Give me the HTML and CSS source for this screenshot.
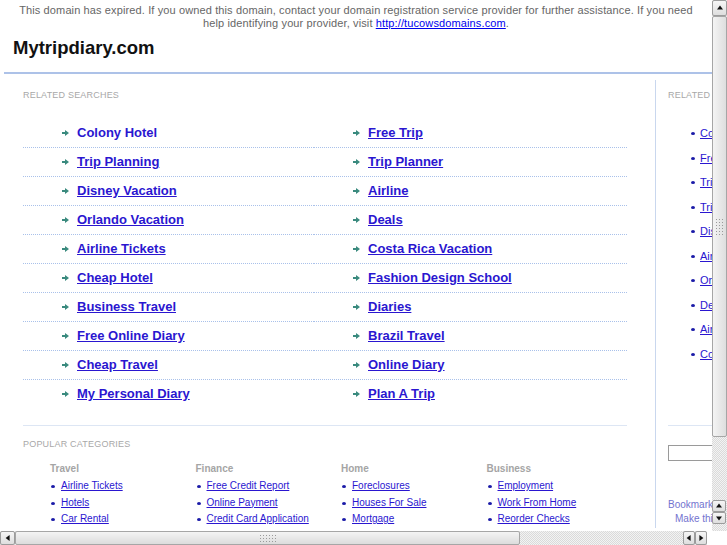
FILE: index.html
```html
<!DOCTYPE html>
<html lang="en">
<head>
  <meta charset="UTF-8">
  <meta name="viewport" content="width=device-width, initial-scale=1.0">
  <title>Mytripdiary.com</title>
  <link rel="stylesheet" href="styles.css">
</head>
<body>
  <div class="notice">
    This domain has expired. If you owned this domain, contact your domain registration service provider for further assistance. If you need help identifying your provider, visit <a href="#">http://tucowsdomains.com</a>.
  </div>

  <div class="page">
    <h1 class="domain">Mytripdiary.com</h1>

    <div class="content">
      <div class="main">
        <h2 class="label">Related Searches</h2>
        <ul class="searches">
          <li><svg class="arrow" viewBox="0 0 7 6"><path d="M0 2h3V0l4 3-4 3V4H0z"/></svg><a href="#" class="hover">Colony Hotel</a></li>
          <li><svg class="arrow" viewBox="0 0 7 6"><path d="M0 2h3V0l4 3-4 3V4H0z"/></svg><a href="#">Free Trip</a></li>
          <li><svg class="arrow" viewBox="0 0 7 6"><path d="M0 2h3V0l4 3-4 3V4H0z"/></svg><a href="#">Trip Planning</a></li>
          <li><svg class="arrow" viewBox="0 0 7 6"><path d="M0 2h3V0l4 3-4 3V4H0z"/></svg><a href="#">Trip Planner</a></li>
          <li><svg class="arrow" viewBox="0 0 7 6"><path d="M0 2h3V0l4 3-4 3V4H0z"/></svg><a href="#">Disney Vacation</a></li>
          <li><svg class="arrow" viewBox="0 0 7 6"><path d="M0 2h3V0l4 3-4 3V4H0z"/></svg><a href="#">Airline</a></li>
          <li><svg class="arrow" viewBox="0 0 7 6"><path d="M0 2h3V0l4 3-4 3V4H0z"/></svg><a href="#">Orlando Vacation</a></li>
          <li><svg class="arrow" viewBox="0 0 7 6"><path d="M0 2h3V0l4 3-4 3V4H0z"/></svg><a href="#">Deals</a></li>
          <li><svg class="arrow" viewBox="0 0 7 6"><path d="M0 2h3V0l4 3-4 3V4H0z"/></svg><a href="#">Airline Tickets</a></li>
          <li><svg class="arrow" viewBox="0 0 7 6"><path d="M0 2h3V0l4 3-4 3V4H0z"/></svg><a href="#">Costa Rica Vacation</a></li>
          <li><svg class="arrow" viewBox="0 0 7 6"><path d="M0 2h3V0l4 3-4 3V4H0z"/></svg><a href="#">Cheap Hotel</a></li>
          <li><svg class="arrow" viewBox="0 0 7 6"><path d="M0 2h3V0l4 3-4 3V4H0z"/></svg><a href="#">Fashion Design School</a></li>
          <li><svg class="arrow" viewBox="0 0 7 6"><path d="M0 2h3V0l4 3-4 3V4H0z"/></svg><a href="#">Business Travel</a></li>
          <li><svg class="arrow" viewBox="0 0 7 6"><path d="M0 2h3V0l4 3-4 3V4H0z"/></svg><a href="#">Diaries</a></li>
          <li><svg class="arrow" viewBox="0 0 7 6"><path d="M0 2h3V0l4 3-4 3V4H0z"/></svg><a href="#">Free Online Diary</a></li>
          <li><svg class="arrow" viewBox="0 0 7 6"><path d="M0 2h3V0l4 3-4 3V4H0z"/></svg><a href="#">Brazil Travel</a></li>
          <li><svg class="arrow" viewBox="0 0 7 6"><path d="M0 2h3V0l4 3-4 3V4H0z"/></svg><a href="#">Cheap Travel</a></li>
          <li><svg class="arrow" viewBox="0 0 7 6"><path d="M0 2h3V0l4 3-4 3V4H0z"/></svg><a href="#">Online Diary</a></li>
          <li><svg class="arrow" viewBox="0 0 7 6"><path d="M0 2h3V0l4 3-4 3V4H0z"/></svg><a href="#">My Personal Diary</a></li>
          <li><svg class="arrow" viewBox="0 0 7 6"><path d="M0 2h3V0l4 3-4 3V4H0z"/></svg><a href="#">Plan A Trip</a></li>
        </ul>

        <div class="popular">
          <h2 class="label">Popular Categories</h2>
          <div class="cats">
            <div class="cat">
              <h3>Travel</h3>
              <ul>
                <li><a href="#">Airline Tickets</a></li>
                <li><a href="#">Hotels</a></li>
                <li><a href="#">Car Rental</a></li>
              </ul>
            </div>
            <div class="cat">
              <h3>Finance</h3>
              <ul>
                <li><a href="#">Free Credit Report</a></li>
                <li><a href="#">Online Payment</a></li>
                <li><a href="#">Credit Card Application</a></li>
              </ul>
            </div>
            <div class="cat">
              <h3>Home</h3>
              <ul>
                <li><a href="#">Foreclosures</a></li>
                <li><a href="#">Houses For Sale</a></li>
                <li><a href="#">Mortgage</a></li>
              </ul>
            </div>
            <div class="cat">
              <h3>Business</h3>
              <ul>
                <li><a href="#">Employment</a></li>
                <li><a href="#">Work From Home</a></li>
                <li><a href="#">Reorder Checks</a></li>
              </ul>
            </div>
          </div>
        </div>
      </div>

      <div class="side">
        <h2 class="label">Related Searches</h2>
        <ul class="side-links">
          <li><a href="#">Colony Hotel</a></li>
          <li><a href="#">Free Trip</a></li>
          <li><a href="#">Trip Planning</a></li>
          <li><a href="#">Trip Planner</a></li>
          <li><a href="#">Disney Vacation</a></li>
          <li><a href="#">Airline</a></li>
          <li><a href="#">Orlando Vacation</a></li>
          <li><a href="#">Deals</a></li>
          <li><a href="#">Airline Tickets</a></li>
          <li><a href="#">Costa Rica Vacation</a></li>
        </ul>
        <div class="side-search">
          <input type="text" class="search-box">
        </div>
        <div class="bookmark">
          <div>Bookmark this page</div>
          <div class="homepage">Make this your homepage</div>
        </div>
      </div>
    </div>
  </div>

  <!-- window scrollbars -->
  <div class="vscroll">
    <div class="sb-btn up tall"></div>
    <div class="sb-thumb"><span class="grip"></span></div>
    <div class="sb-track"></div>
    <div class="sb-btn up small"></div>
    <div class="sb-btn down small"></div>
    <div class="sb-end"></div>
  </div>
  <div class="hscroll">
    <div class="sb-btn left wide"></div>
    <div class="sb-thumb"><span class="grip"></span></div>
    <div class="sb-track"></div>
    <div class="sb-btn left narrow"></div>
    <div class="sb-btn right narrow"></div>
    <div class="sb-corner"></div>
  </div>
</body>
</html>
```

FILE: styles.css
```css
* {
  margin: 0;
  padding: 0;
  box-sizing: border-box;
}

html,
body {
  overflow: hidden;
}

body {
  font-family: "Liberation Sans", Arial, Helvetica, sans-serif;
  background-color: #fff;
  color: #333;
  width: 727px;
  height: 545px;
}

a {
  color: #2a16d0;
}

.notice {
  width: 712px;
  padding: 4px 18px 0;
  font-size: 11px;
  line-height: 13px;
  letter-spacing: 0.12px;
  color: #666;
  text-align: center;
}

.notice a {
  color: #0000ee;
}

.page {
  width: 880px;
  padding-left: 4px;
}

.domain {
  font-size: 18.5px;
  line-height: 22px;
  color: #111;
  margin: 7px 0 13px 9px;
}

.content {
  display: flex;
  border-top: 2px solid #adc2e8;
  padding-top: 6px;
}

.main {
  width: 651px;
  padding: 9px 0 0 19px;
}

.label {
  font-size: 9px;
  font-weight: normal;
  line-height: 12px;
  letter-spacing: 0.2px;
  color: #a8a8a8;
  text-transform: uppercase;
}

/* related searches */
.searches {
  list-style: none;
  width: 604px;
  display: grid;
  grid-template-columns: 291px 313px;
  margin: 18px 0 17px;
}

.searches li {
  height: 29px;
  display: flex;
  align-items: center;
  gap: 8px;
  padding-left: 39px;
  border-bottom: 1px dotted #a9c1ea;
}

.searches li:nth-last-child(-n+2) {
  border-bottom: none;
  height: 28px;
}

.searches a {
  font-size: 13px;
  font-weight: bold;
  line-height: 16px;
}

.searches a.hover {
  text-decoration: none;
}

.arrow {
  width: 7px;
  height: 6px;
  fill: #3a8a7e;
  flex-shrink: 0;
}

/* popular categories */
.popular {
  width: 604px;
  border-top: 1px solid #dde6f4;
  padding-top: 12px;
}

.cats {
  display: grid;
  grid-template-columns: repeat(4, 145.5px);
  padding-left: 27px;
  margin-top: 13px;
}

.cat h3 {
  font-size: 10px;
  line-height: 12px;
  color: #a5a5a5;
  margin-bottom: 3px;
}

.cat ul {
  list-style: none;
}

.cat li {
  position: relative;
  font-size: 10px;
  line-height: 16.5px;
  padding-left: 11px;
  white-space: nowrap;
}

.cat li::before,
.side-links li::before {
  content: "";
  position: absolute;
  left: 1px;
  top: 7px;
  width: 4px;
  height: 3px;
  border-radius: 50%;
  background-color: #1b1ba8;
}

/* sidebar */
.side {
  width: 225px;
  border-left: 1px solid #c9d7ee;
  padding: 9px 0 0 12px;
}

.side-links {
  list-style: none;
  margin-top: 20px;
  padding-left: 23px;
}

.side-links li {
  position: relative;
  font-size: 11px;
  line-height: 24.5px;
  padding-left: 9px;
  white-space: nowrap;
}

.side-links li::before {
  left: 0;
  top: 11px;
}

.side-search {
  border-top: 1px solid #dde6f4;
  margin-top: 59px;
  padding-top: 19px;
}

.search-box {
  display: block;
  width: 150px;
  height: 16px;
  border: 1px solid #9a9a9a;
  background-color: #fff;
}

.bookmark {
  margin-top: 37px;
  font-size: 10px;
  line-height: 14px;
  color: #7373cf;
}

.bookmark .homepage {
  padding-left: 7px;
}

/* fake window scrollbars */
.vscroll,
.hscroll {
  position: fixed;
  display: flex;
  background: repeating-conic-gradient(#dadada 0 25%, #f3f3f3 0 50%) 0 0 / 2px 2px;
}

.vscroll {
  top: 0;
  right: 0;
  width: 15px;
  height: 531px;
  flex-direction: column;
}

.hscroll {
  left: 0;
  bottom: 0;
  width: 727px;
  height: 14px;
}

.sb-btn {
  position: relative;
  flex-shrink: 0;
  background: linear-gradient(#f6f6f6, #dedede);
  border: 1px solid #9c9c9c;
  border-radius: 2px;
}

.sb-btn::after {
  content: "";
  position: absolute;
  left: 50%;
  top: 50%;
  border: 3px solid transparent;
}

.sb-btn.up::after {
  border-bottom: 4px solid #111;
  border-top-width: 0;
  transform: translate(-50%, -60%);
}

.sb-btn.down::after {
  border-top: 4px solid #111;
  border-bottom-width: 0;
  transform: translate(-50%, -40%);
}

.sb-btn.left::after {
  border-right: 4px solid #111;
  border-left-width: 0;
  transform: translate(-60%, -50%);
}

.sb-btn.right::after {
  border-left: 4px solid #111;
  border-right-width: 0;
  transform: translate(-40%, -50%);
}

.vscroll .tall {
  height: 16px;
}

.vscroll .small {
  height: 12px;
  width: 14px;
}

.vscroll .sb-thumb {
  height: 421px;
}

.vscroll .sb-track {
  flex: 1;
}

.vscroll .sb-end {
  height: 7px;
}

.hscroll .wide {
  width: 15px;
}

.hscroll .narrow {
  width: 12px;
}

.hscroll .sb-thumb {
  width: 505px;
  background: linear-gradient(#f4f4f4, #dcdcdc);
}

.hscroll .sb-track {
  flex: 1;
}

.sb-corner {
  width: 20px;
  background-color: #fff;
}

.sb-thumb {
  display: flex;
  align-items: center;
  justify-content: center;
  flex-shrink: 0;
  background: linear-gradient(to right, #f4f4f4, #dedede);
  border: 1px solid #a6a6a6;
  border-radius: 2px;
}

.grip {
  display: block;
  background: radial-gradient(circle, #9a9a9a 0.6px, transparent 0.9px) 0 0 / 3px 3px;
}

.vscroll .grip {
  width: 9px;
  height: 18px;
}

.hscroll .grip {
  width: 18px;
  height: 9px;
}
```
